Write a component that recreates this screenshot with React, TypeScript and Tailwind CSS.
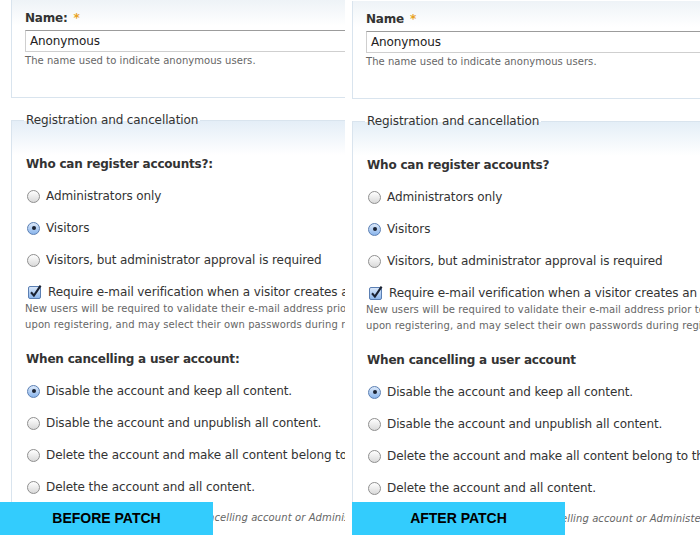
import React from "react";

function Radio({ checked }: { checked?: boolean }) {
  return (
    <span
      className={
        checked
          ? "flex h-[13px] w-[13px] shrink-0 items-center justify-center rounded-full border border-[#5b7fb3] bg-[linear-gradient(to_bottom,#dce9fa,#8ab5ec)]"
          : "flex h-[13px] w-[13px] shrink-0 items-center justify-center rounded-full border border-[#8f8f8f] bg-[linear-gradient(to_bottom,#ffffff,#d9d9d9)]"
      }
    >
      {checked && <span className="h-[4px] w-[4px] rounded-full bg-[#1a2232]" />}
    </span>
  );
}

function Checkbox() {
  return (
    <svg width="14" height="14" viewBox="0 0 14 14" className="shrink-0 overflow-visible">
      <defs>
        <linearGradient id="cbfill" x1="0" y1="0" x2="0" y2="1">
          <stop offset="0" stopColor="#dce9fa" />
          <stop offset="1" stopColor="#8ab5ec" />
        </linearGradient>
      </defs>
      <rect x="0.5" y="1.5" width="12" height="12" rx="1.5" fill="url(#cbfill)" stroke="#5b7fb3" />
      <path d="M3 7.2 L5.9 10.6 L12.6 0.6" stroke="#1a2232" strokeWidth="2.1" fill="none" />
    </svg>
  );
}

function Option({ label, checked }: { label: string; checked?: boolean }) {
  return (
    <div className="flex h-[32px] items-center gap-[6px] pl-[1px] whitespace-nowrap">
      <Radio checked={checked} />
      <span>{label}</span>
    </div>
  );
}

function Panel({ after }: { after?: boolean }) {
  return (
    <div className="w-[800px] text-[12px] tracking-[-0.1px] text-[#333]">
      {/* Anonymous name */}
      <div className="border-b border-l border-[#d9e4ee] bg-[linear-gradient(to_bottom,#eef3f7,#ffffff_26px)] pt-[11px] pb-[30px] pl-[13px]">
        <div className="flex h-[14px] items-center font-bold tracking-[-0.2px]">
          {after ? "Name" : "Name:"}
          <span className="ml-[6px] text-[#e8a21f]">*</span>
        </div>
        <div className="mt-[5px] flex h-[22px] items-center border border-[#cfcfcf] border-t-[#9c9c9c] bg-white pl-[4px] text-[#222]">
          Anonymous
        </div>
        <div className="mt-[3px] text-[10px] leading-[12px] tracking-[0.05px] text-[#666]">
          The name used to indicate anonymous users.
        </div>
      </div>

      {/* Registration and cancellation */}
      <fieldset className="mt-[15px] border-t border-l border-[#d9e4ee] bg-[linear-gradient(to_bottom,#e4eef7,#ffffff_34px)] pt-[21px] pl-[14px]">
        <legend className="-ml-[2px] px-[2px] leading-[14px]">Registration and cancellation</legend>
        <div className="flex h-[32px] items-center font-bold tracking-[-0.2px]">
          {after ? "Who can register accounts?" : "Who can register accounts?:"}
        </div>
        <Option label="Administrators only" />
        <Option label="Visitors" checked />
        <Option label="Visitors, but administrator approval is required" />
        <div className="pt-[9px]">
          <div className="flex h-[14px] items-center gap-[6px] pl-[2px] whitespace-nowrap">
            <Checkbox />
            <span>Require e-mail verification when a visitor creates an account.</span>
          </div>
          <div className="-ml-[1px] mt-[2px] text-[10px] leading-[16px] tracking-[0.1px] whitespace-nowrap text-[#666]">
            <div>
              New users will be required to validate their e-mail address prior to logging into the site, and will be
              assigned a system-generated password.
            </div>
            <div>upon registering, and may select their own passwords during registration.</div>
          </div>
        </div>
        <div className="mt-[10px] flex h-[32px] items-center font-bold tracking-[-0.2px]">
          {after ? "When cancelling a user account" : "When cancelling a user account:"}
        </div>
        <Option label="Disable the account and keep all content." checked />
        <Option label="Disable the account and unpublish all content." />
        <Option label="Delete the account and make all content belong to the Anonymous user." />
        <Option label="Delete the account and all content." />
        <div className="-ml-[1px] mt-[7px] pb-[20px] text-[10px] leading-[16px] tracking-[0.1px] whitespace-nowrap text-[#666]">
          Users with the <em>Select method for cancelling account or Administer users</em> permissions can override
          this default method.
        </div>
      </fieldset>
    </div>
  );
}

export default function App() {
  return (
    <div className="relative flex h-[535px] w-[700px] gap-[7px] overflow-hidden bg-white font-['DejaVu_Sans',Verdana,sans-serif]">
      <div className="w-[345px] shrink-0 overflow-hidden pl-[11px]">
        <Panel />
      </div>
      <div className="flex-1 overflow-hidden pt-[1px]">
        <Panel after />
      </div>

      <div className="absolute bottom-0 left-0 flex h-[33px] w-[213px] items-center justify-center bg-[#33ccfd] font-['Liberation_Sans',Arial,sans-serif] text-[14px] font-bold text-black">
        BEFORE PATCH
      </div>
      <div className="absolute bottom-0 left-[352px] flex h-[33px] w-[213px] items-center justify-center bg-[#33ccfd] font-['Liberation_Sans',Arial,sans-serif] text-[14px] font-bold text-black">
        AFTER PATCH
      </div>
    </div>
  );
}
